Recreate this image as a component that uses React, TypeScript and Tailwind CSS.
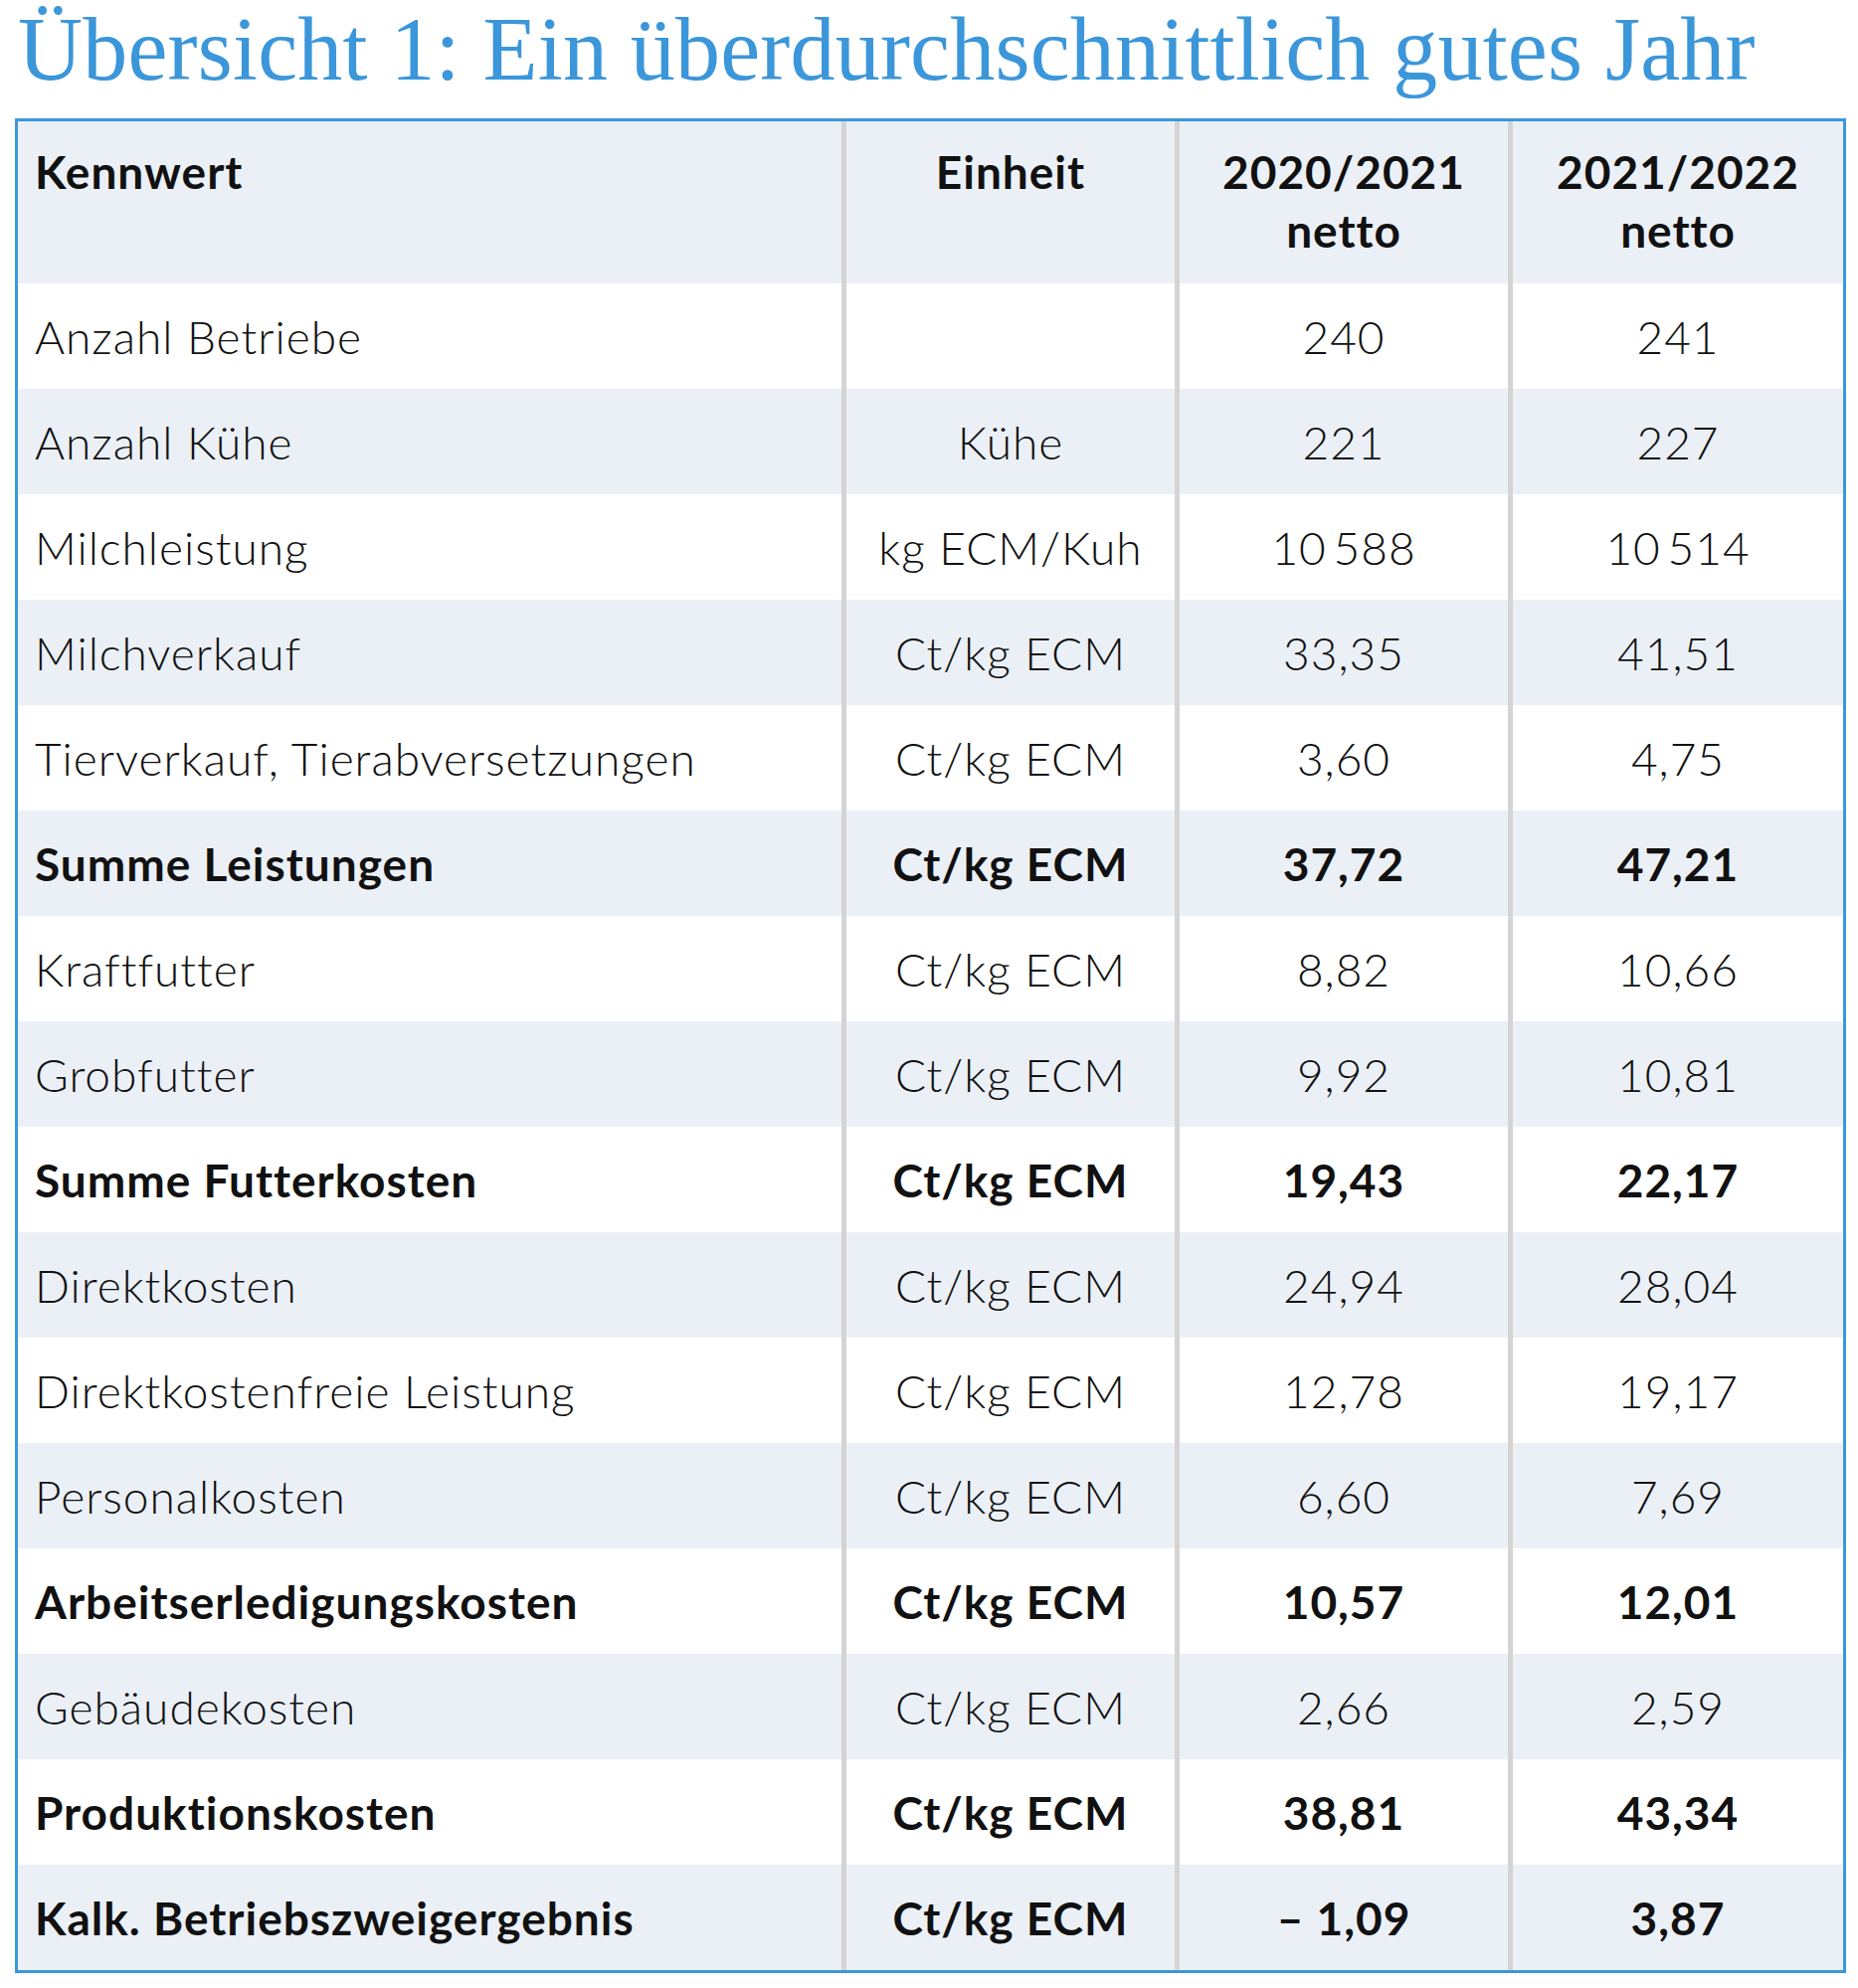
const rows = [
  { label: "Anzahl Betriebe", unit: "", a: "240", b: "241" },
  { label: "Anzahl Kühe", unit: "Kühe", a: "221", b: "227" },
  { label: "Milchleistung", unit: "kg ECM/Kuh", a: "10\u2009588", b: "10\u2009514" },
  { label: "Milchverkauf", unit: "Ct/kg ECM", a: "33,35", b: "41,51" },
  { label: "Tierverkauf, Tierabversetzungen", unit: "Ct/kg ECM", a: "3,60", b: "4,75" },
  { label: "Summe Leistungen", unit: "Ct/kg ECM", a: "37,72", b: "47,21", bold: true },
  { label: "Kraftfutter", unit: "Ct/kg ECM", a: "8,82", b: "10,66" },
  { label: "Grobfutter", unit: "Ct/kg ECM", a: "9,92", b: "10,81" },
  { label: "Summe Futterkosten", unit: "Ct/kg ECM", a: "19,43", b: "22,17", bold: true },
  { label: "Direktkosten", unit: "Ct/kg ECM", a: "24,94", b: "28,04" },
  { label: "Direktkostenfreie Leistung", unit: "Ct/kg ECM", a: "12,78", b: "19,17" },
  { label: "Personalkosten", unit: "Ct/kg ECM", a: "6,60", b: "7,69" },
  { label: "Arbeitserledigungskosten", unit: "Ct/kg ECM", a: "10,57", b: "12,01", bold: true },
  { label: "Gebäudekosten", unit: "Ct/kg ECM", a: "2,66", b: "2,59" },
  { label: "Produktionskosten", unit: "Ct/kg ECM", a: "38,81", b: "43,34", bold: true },
  { label: "Kalk. Betriebszweigergebnis", unit: "Ct/kg ECM", a: "\u2013 1,09", b: "3,87", bold: true },
]

export default function App() {
  return (
    <div className="min-h-[1999px] w-[1868px] bg-white font-['Lato',sans-serif] text-[#111]">
      {/* Title */}
      <h1 className="pl-[18px] font-['Liberation_Serif',serif] text-[90px] leading-[100px] tracking-[0.2px] text-[#3b96da]">
        Übersicht 1: Ein überdurchschnittlich gutes Jahr
      </h1>

      {/* Table */}
      <div className="ml-[15px] mt-[19px] w-[1841px] border-[3px] border-[#3b97dc] text-[46px] tracking-[1px]">
        <div className="grid h-[163px] grid-cols-[828px_335px_335px_1fr] bg-[#ebf0f7] font-bold leading-[59px]">
          <div className="pl-[17px] pt-[21px]">Kennwert</div>
          <div className="border-l-[5px] border-[#d4d4d4] pt-[21px] text-center">Einheit</div>
          <div className="border-l-[5px] border-[#d4d4d4] pt-[21px] text-center">
            2020/2021
            <br />
            netto
          </div>
          <div className="border-l-[5px] border-[#d4d4d4] pt-[21px] text-center">
            2021/2022
            <br />
            netto
          </div>
        </div>

        {rows.map((row, i) => (
          <div
            key={i}
            className={`grid h-[106px] grid-cols-[828px_335px_335px_1fr] ${
              i % 2 === 0 ? "bg-white" : "bg-[#ebf0f7]"
            } ${row.bold ? "font-bold" : "font-light"}`}
          >
            <div className="flex items-center pl-[17px]">{row.label}</div>
            <div className="flex items-center justify-center border-l-[5px] border-[#d4d4d4]">{row.unit}</div>
            <div className="flex items-center justify-center border-l-[5px] border-[#d4d4d4]">{row.a}</div>
            <div className="flex items-center justify-center border-l-[5px] border-[#d4d4d4]">{row.b}</div>
          </div>
        ))}
      </div>
    </div>
  )
}
